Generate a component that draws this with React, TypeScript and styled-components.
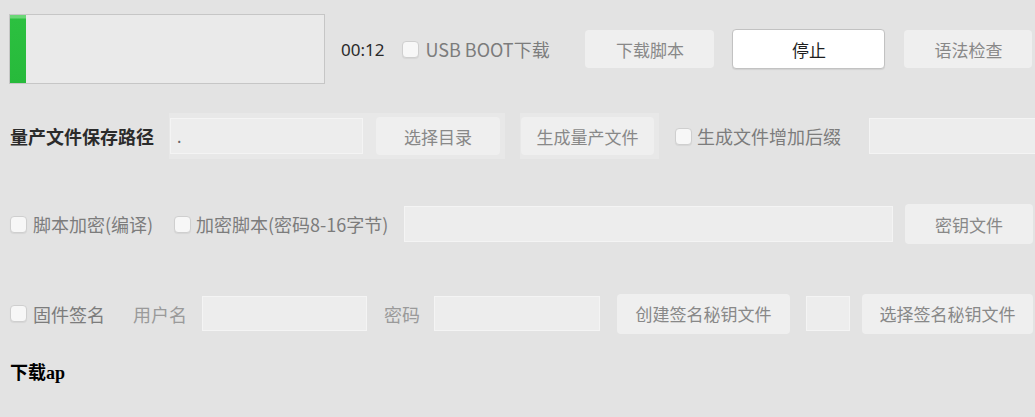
import React from "react";
import styled, { createGlobalStyle } from "styled-components";

const GlobalStyle = createGlobalStyle`
    html, body {
        margin: 0;
        padding: 0;
        background: #e3e3e3;
        overflow: hidden;
    }
    body {
        font-family: "Noto Sans CJK SC", "Noto Sans", sans-serif;
    }
`;

const Pagina = styled.div`
    width: 1035px;
    height: 417px;
    display: flex;
    flex-direction: column;
    padding-left: 9px;
    box-sizing: border-box;
    overflow: hidden;
`;

const Linha = styled.div<{ $topo: number; $altura: number }>`
    display: flex;
    align-items: center;
    margin-top: ${(p) => p.$topo}px;
    height: ${(p) => p.$altura}px;
    flex-shrink: 0;
    white-space: nowrap;
`;

const Espaco = styled.div<{ $w: number }>`
    width: ${(p) => p.$w}px;
    flex-shrink: 0;
`;

const Progresso = styled.div`
    width: 316px;
    height: 70px;
    box-sizing: border-box;
    border: 1px solid #c6c6c6;
    background: #eaeaea;
    display: flex;
`;

const Preenchimento = styled.div`
    width: 16px;
    height: 100%;
    background: linear-gradient(to bottom, #6bd777 0px, #6bd777 3px, #2cc040 4px, #27ba3b 100%);
`;

const Tempo = styled.span`
    font-size: 17px;
    color: #2a2a2a;
    font-family: "Noto Sans", "Noto Sans CJK SC", sans-serif;
    line-height: 1;
`;

const Caixa = styled.span`
    width: 17px;
    height: 17px;
    box-sizing: border-box;
    border: 1px solid #cfcfcf;
    border-radius: 4px;
    background: #f7f7f7;
    box-shadow: 0 1px 1px rgba(0, 0, 0, 0.06);
    flex-shrink: 0;
`;

const Rotulo = styled.span<{ $cor?: string; $negrito?: boolean; $w?: number }>`
    font-size: 18px;
    line-height: 1;
    color: ${(p) => p.$cor || "#7c7c7c"};
    font-weight: ${(p) => (p.$negrito ? 700 : 400)};
    width: ${(p) => (p.$w ? `${p.$w}px` : "auto")};
    flex-shrink: 0;
`;

const Botao = styled.div<{ $w: number; $h: number }>`
    width: ${(p) => p.$w}px;
    height: ${(p) => p.$h}px;
    box-sizing: border-box;
    flex-shrink: 0;
    display: flex;
    align-items: center;
    justify-content: center;
    background: #efefef;
    border-radius: 4px;
    font-size: 17px;
    color: #888888;
`;

const BotaoParar = styled(Botao)`
    background: #ffffff;
    border: 1px solid #c2c2c2;
    box-shadow: 0 1px 1px rgba(0, 0, 0, 0.08);
    color: #1e1e1e;
`;

const Moldura = styled.div`
    display: flex;
    align-items: center;
    padding: 4px 5px 4px 1px;
    background: #e8e8e8;
    flex-shrink: 0;
`;

const Campo = styled.div<{ $w: number; $h: number }>`
    width: ${(p) => p.$w}px;
    height: ${(p) => p.$h}px;
    box-sizing: border-box;
    flex-shrink: 0;
    background: #ededed;
    border: 1px solid #f4f4f4;
    font-size: 16px;
    color: #666;
    padding-left: 6px;
    display: flex;
    align-items: center;
`;

const Titulo = styled.div`
    margin-top: 29px;
    margin-left: 1px;
    font-family: "Liberation Serif", "Noto Sans CJK SC", serif;
    font-weight: 700;
    font-size: 18px;
    line-height: 20px;
    color: #000;
`;

export default function App() {
    return (
        <>
            <GlobalStyle />
            <Pagina>
                <Linha $topo={14} $altura={70}>
                    <Progresso>
                        <Preenchimento />
                    </Progresso>
                    <Espaco $w={16} />
                    <Tempo>00:12</Tempo>
                    <Espaco $w={18} />
                    <Caixa />
                    <Espaco $w={6} />
                    <Rotulo $w={131}>USB BOOT下载</Rotulo>
                    <Espaco $w={29} />
                    <Botao $w={129} $h={38}>下载脚本</Botao>
                    <Espaco $w={18} />
                    <BotaoParar $w={153} $h={40}>停止</BotaoParar>
                    <Espaco $w={19} />
                    <Botao $w={128} $h={38}>语法检查</Botao>
                </Linha>

                <Linha $topo={29} $altura={46}>
                    <Espaco $w={1} />
                    <Rotulo $cor="#2b2b2b" $negrito>
                        量产文件保存路径
                    </Rotulo>
                    <Espaco $w={15} />
                    <Moldura>
                        <Campo $w={193} $h={36}>.</Campo>
                        <Espaco $w={13} />
                        <Botao $w={124} $h={38}>选择目录</Botao>
                    </Moldura>
                    <Espaco $w={15} />
                    <Moldura>
                        <Botao $w={133} $h={38}>生成量产文件</Botao>
                    </Moldura>
                    <Espaco $w={16} />
                    <Caixa />
                    <Espaco $w={5} />
                    <Rotulo $w={146}>生成文件增加后缀</Rotulo>
                    <Espaco $w={26} />
                    <Campo $w={180} $h={36} />
                </Linha>

                <Linha $topo={44} $altura={42}>
                    <Espaco $w={1} />
                    <Caixa />
                    <Espaco $w={6} />
                    <Rotulo $w={121}>脚本加密(编译)</Rotulo>
                    <Espaco $w={20} />
                    <Caixa />
                    <Espaco $w={5} />
                    <Rotulo $w={195}>加密脚本(密码8-16字节)</Rotulo>
                    <Espaco $w={13} />
                    <Campo $w={489} $h={36} />
                    <Espaco $w={12} />
                    <Botao $w={128} $h={40}>密钥文件</Botao>
                </Linha>

                <Linha $topo={48} $altura={41}>
                    <Espaco $w={1} />
                    <Caixa />
                    <Espaco $w={6} />
                    <Rotulo $w={72}>固件签名</Rotulo>
                    <Espaco $w={28} />
                    <Rotulo $cor="#9a9a9a" $w={54}>用户名</Rotulo>
                    <Espaco $w={15} />
                    <Campo $w={165} $h={35} />
                    <Espaco $w={17} />
                    <Rotulo $cor="#9a9a9a" $w={36}>密码</Rotulo>
                    <Espaco $w={14} />
                    <Campo $w={166} $h={35} />
                    <Espaco $w={17} />
                    <Botao $w={173} $h={40}>创建签名秘钥文件</Botao>
                    <Espaco $w={16} />
                    <Campo $w={44} $h={35} />
                    <Espaco $w={12} />
                    <Botao $w={171} $h={40}>选择签名秘钥文件</Botao>
                </Linha>

                <Titulo>下载ap</Titulo>
            </Pagina>
        </>
    );
}
